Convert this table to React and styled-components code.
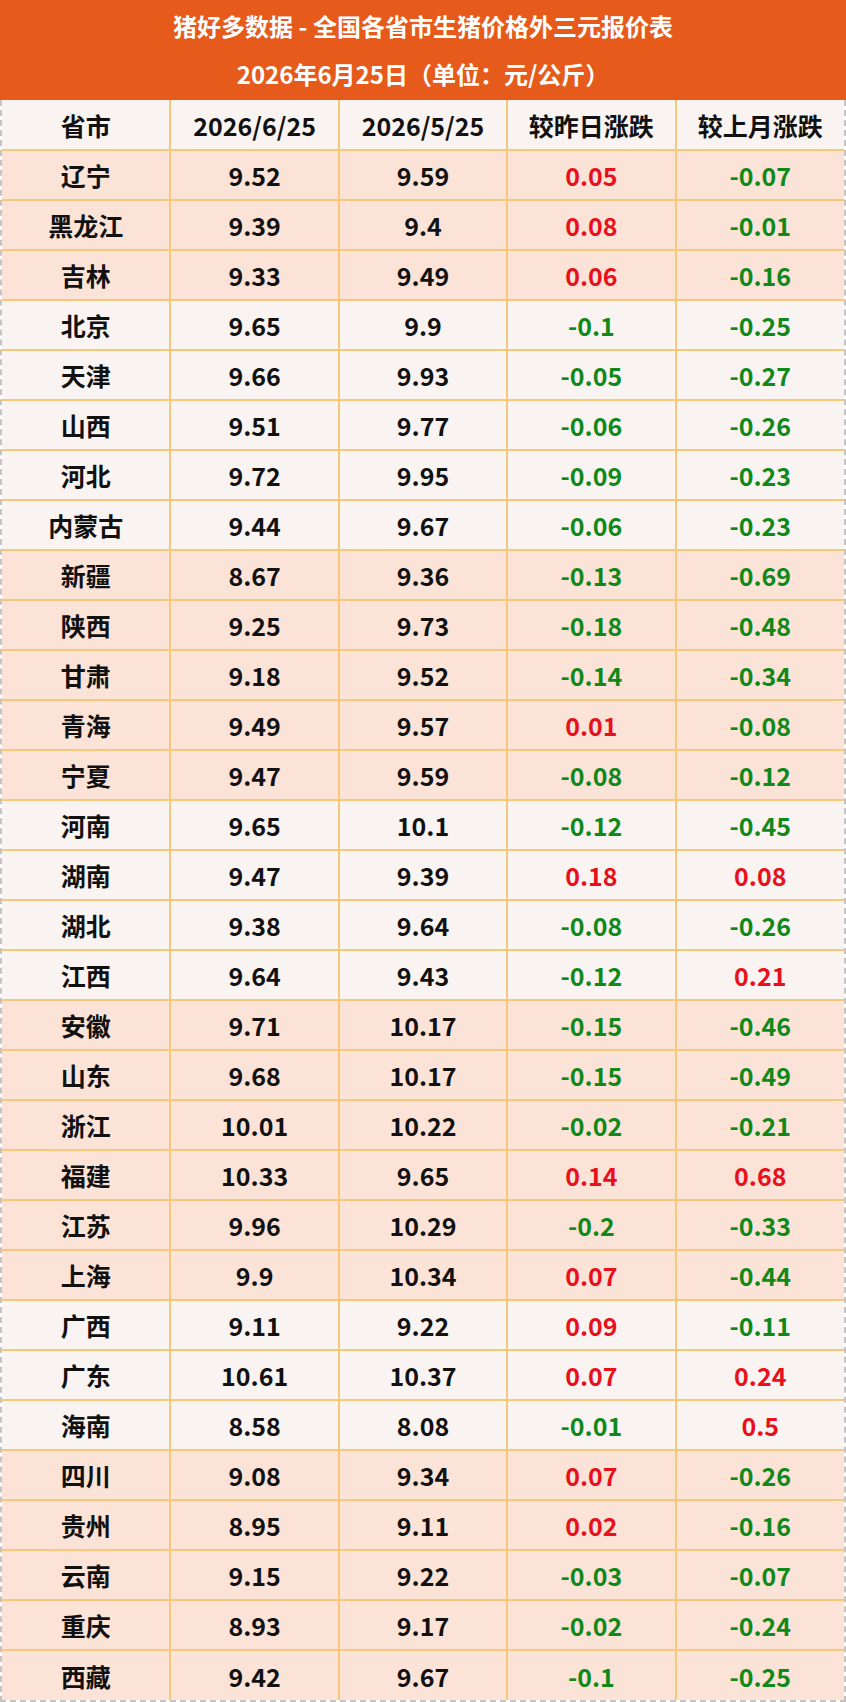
import React from "react";
import styled, { createGlobalStyle } from "styled-components";

const GlobalStyle = createGlobalStyle`
  body {
    margin: 0;
    background: #ffffff;
    font-family: "Noto Sans CJK SC", "Noto Sans", sans-serif;
  }
`;

const rows = [
  ["辽宁", "9.52", "9.59", "0.05", "-0.07", 1],
  ["黑龙江", "9.39", "9.4", "0.08", "-0.01", 1],
  ["吉林", "9.33", "9.49", "0.06", "-0.16", 1],
  ["北京", "9.65", "9.9", "-0.1", "-0.25", 0],
  ["天津", "9.66", "9.93", "-0.05", "-0.27", 0],
  ["山西", "9.51", "9.77", "-0.06", "-0.26", 0],
  ["河北", "9.72", "9.95", "-0.09", "-0.23", 0],
  ["内蒙古", "9.44", "9.67", "-0.06", "-0.23", 0],
  ["新疆", "8.67", "9.36", "-0.13", "-0.69", 1],
  ["陕西", "9.25", "9.73", "-0.18", "-0.48", 1],
  ["甘肃", "9.18", "9.52", "-0.14", "-0.34", 1],
  ["青海", "9.49", "9.57", "0.01", "-0.08", 1],
  ["宁夏", "9.47", "9.59", "-0.08", "-0.12", 1],
  ["河南", "9.65", "10.1", "-0.12", "-0.45", 0],
  ["湖南", "9.47", "9.39", "0.18", "0.08", 0],
  ["湖北", "9.38", "9.64", "-0.08", "-0.26", 0],
  ["江西", "9.64", "9.43", "-0.12", "0.21", 0],
  ["安徽", "9.71", "10.17", "-0.15", "-0.46", 1],
  ["山东", "9.68", "10.17", "-0.15", "-0.49", 1],
  ["浙江", "10.01", "10.22", "-0.02", "-0.21", 1],
  ["福建", "10.33", "9.65", "0.14", "0.68", 1],
  ["江苏", "9.96", "10.29", "-0.2", "-0.33", 1],
  ["上海", "9.9", "10.34", "0.07", "-0.44", 1],
  ["广西", "9.11", "9.22", "0.09", "-0.11", 0],
  ["广东", "10.61", "10.37", "0.07", "0.24", 0],
  ["海南", "8.58", "8.08", "-0.01", "0.5", 0],
  ["四川", "9.08", "9.34", "0.07", "-0.26", 1],
  ["贵州", "8.95", "9.11", "0.02", "-0.16", 1],
  ["云南", "9.15", "9.22", "-0.03", "-0.07", 1],
  ["重庆", "8.93", "9.17", "-0.02", "-0.24", 1],
  ["西藏", "9.42", "9.67", "-0.1", "-0.25", 1],
];

const Page = styled.div`
  width: 846px;
`;

const Banner = styled.div`
  height: 100px;
  background: #e65a1b;
  color: #ffffff;
  font-weight: 700;
  font-size: 24px;
  display: flex;
  flex-direction: column;
  align-items: center;
  justify-content: center;
  gap: 14px;
  line-height: 34px;
`;

const Frame = styled.div`
  border-left: 2px dashed #c4c4c4;
  border-right: 2px dashed #c4c4c4;
  border-bottom: 2px dashed #c4c4c4;
  box-sizing: border-box;
`;

const Table = styled.table`
  width: 100%;
  border-collapse: collapse;
  table-layout: fixed;
`;

const Row = styled.tr`
  height: 50px;
  background: ${(p) => (p.$peach ? "#fbe3d7" : "#f9f4f1")};

  &:first-child td,
  &:first-child th {
    border-top: none;
  }
  &:last-child td {
    border-bottom: none;
  }
`;

const Cell = styled.td`
  border: 2px solid #f7c77a;
  text-align: center;
  font-size: 25px;
  line-height: 30px;
  font-weight: 700;
  padding: 0;
  color: ${(p) => p.$color || "#111111"};

  &:first-child {
    border-left: none;
  }
  &:last-child {
    border-right: none;
  }
`;

const Head = styled(Cell).attrs({ as: "th" })``;

const tone = (v) => (v.startsWith("-") ? "#10881a" : "#e8101c");

export default function App() {
  return (
    <Page>
      <GlobalStyle />
      <Banner>
        <div>猪好多数据 - 全国各省市生猪价格外三元报价表</div>
        <div>2026年6月25日（单位：元/公斤）</div>
      </Banner>
      <Frame>
        <Table>
          <tbody>
            <Row>
              <Head>省市</Head>
              <Head>2026/6/25</Head>
              <Head>2026/5/25</Head>
              <Head>较昨日涨跌</Head>
              <Head>较上月涨跌</Head>
            </Row>
            {rows.map(([name, now, last, day, month, peach]) => (
              <Row key={name} $peach={peach === 1}>
                <Cell>{name}</Cell>
                <Cell>{now}</Cell>
                <Cell>{last}</Cell>
                <Cell $color={tone(day)}>{day}</Cell>
                <Cell $color={tone(month)}>{month}</Cell>
              </Row>
            ))}
          </tbody>
        </Table>
      </Frame>
    </Page>
  );
}
